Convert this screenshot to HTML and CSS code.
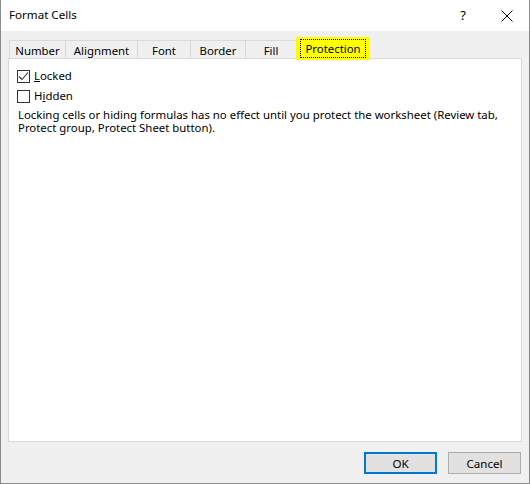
FILE: index.html
```html
<!DOCTYPE html>
<html>
<head>
<meta charset="utf-8">
<link rel="stylesheet" href="styles.css">
</head>
<body>
<div class="dialog">
  <div class="titlebar">
    <span class="title">Format Cells</span>
    <span class="help">?</span>
    <span class="close">
      <svg width="12" height="12" viewBox="0 0 12 12"><path d="M0.5 0.5 L11.5 11.5 M11.5 0.5 L0.5 11.5" stroke="#000" stroke-width="1" fill="none"/></svg>
    </span>
  </div>
  <div class="content">
    <div class="tabs">
      <div class="tab t-number">Number</div>
      <div class="tab t-align">Alignment</div>
      <div class="tab t-font">Font</div>
      <div class="tab t-border">Border</div>
      <div class="tab t-fill">Fill</div>
      <div class="tab tab-active"><span class="focus">Protection</span></div>
    </div>
    <div class="panel">
      <label class="check">
        <span class="box">
          <svg width="11" height="11" viewBox="0 0 11 11"><path d="M1 5.5 L4 8.5 L10 1.5" stroke="#333" stroke-width="1.1" fill="none"/></svg>
        </span>
        <span class="lbl"><u>L</u>ocked</span>
      </label>
      <label class="check">
        <span class="box"></span>
        <span class="lbl">H<u>i</u>dden</span>
      </label>
      <p class="note">Locking cells or hiding formulas has no effect until you protect the worksheet (Review tab, Protect group, Protect Sheet button).</p>
    </div>
    <div class="footer">
      <button class="btn btn-default">OK</button>
      <button class="btn">Cancel</button>
    </div>
  </div>
</div>
</body>
</html>
```

FILE: styles.css
```css
html, body {
  margin: 0;
  padding: 0;
}
body {
  font-family: "Noto Sans", "Open Sans", "DejaVu Sans", sans-serif;
  font-size: 11.4px;
  color: #000;
}
.dialog {
  width: 530px;
  height: 484px;
  box-sizing: border-box;
  border: 1px solid #8c8c8c;
  border-top: none;
  background: #f0f0f0;
  display: flex;
  flex-direction: column;
}
.titlebar {
  height: 31px;
  background: #fff;
  display: flex;
  align-items: center;
  padding-left: 8px;
  flex: none;
}
.title {
  flex: 1;
  font-size: 11.6px;
  position: relative;
  top: -1px;
}
.help {
  width: 16px;
  text-align: center;
  font-size: 13px;
  margin-right: 30px;
  position: relative;
  top: -1px;
}
.close {
  width: 12px;
  height: 12px;
  margin-right: 16px;
  display: flex;
}
.content {
  flex: 1;
  display: flex;
  flex-direction: column;
  padding: 7px 7px 9px 7px;
}
.tabs {
  display: flex;
  align-items: flex-end;
  height: 21px;
  padding-left: 1px;
  position: relative;
  z-index: 1;
  margin-bottom: -1px;
}
.tab {
  height: 18px;
  box-sizing: border-box;
  border: 1px solid #d9d9d9;
  border-bottom: none;
  border-right: none;
  background: #f0f0f0;
  display: flex;
  align-items: center;
  justify-content: center;
  padding-top: 1px;
  margin-bottom: 1px;
}
.t-number { width: 56px; }
.t-align { width: 72px; }
.t-font { width: 53px; }
.t-border { width: 55px; }
.t-fill { width: 52px; border-right: 1px solid #d9d9d9; }
.tab-active {
  width: 74px;
  height: 23px;
  margin-left: -1px;
  margin-bottom: -1px;
  background: #ffff00;
  border: none;
  padding-top: 0;
  padding-bottom: 1px;
}
.focus {
  outline: 1px dotted #000;
  outline-offset: 0;
  padding: 1px 4px 1px 4px;
  line-height: 15px;
}
.panel {
  flex: 1;
  background: #fff;
  border: 1px solid #d9d9d9;
  padding: 7px 8px 0 8px;
}
.check {
  display: flex;
  align-items: center;
  height: 20px;
  line-height: 20px;
}
.lbl {
  line-height: 14px;
}
.box {
  width: 13px;
  height: 13px;
  box-sizing: border-box;
  border: 1px solid #333;
  margin-right: 4px;
  display: flex;
  align-items: center;
  justify-content: center;
  flex: none;
}
.note {
  margin: 2px 0 0 1px;
  line-height: 13px;
}
.footer {
  display: flex;
  justify-content: flex-end;
  gap: 11px;
  padding-top: 10px;
  padding-right: 1px;
}
.btn {
  width: 73px;
  height: 22px;
  box-sizing: border-box;
  background: #e1e1e1;
  border: 1px solid #adadad;
  font-family: inherit;
  font-size: 11.6px;
  color: #000;
  padding: 0;
  margin: 0;
}
.btn-default {
  border: 2px solid #0078d7;
}
```
